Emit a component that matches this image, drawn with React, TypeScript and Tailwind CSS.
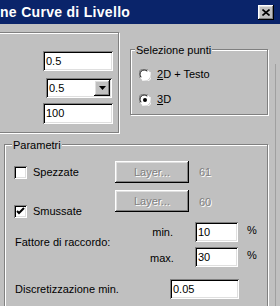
import React from 'react';

const etched = 'border border-[#808080] shadow-[inset_1px_1px_0_#fff,1px_1px_0_#fff]';
const sunken =
  'bg-white shadow-[inset_1px_1px_0_#808080,inset_-1px_-1px_0_#fff,inset_2px_2px_0_#000,inset_-2px_-2px_0_#dfdfdf]';
const raised =
  'bg-[#c0c0c0] shadow-[inset_-1px_-1px_0_#000,inset_1px_1px_0_#fff,inset_-2px_-2px_0_#808080,inset_2px_2px_0_#dfdfdf]';
const etchedText = 'text-[#808080] [text-shadow:1px_1px_0_#fff]';

const TextBox = ({ value, className }: { value: string; className: string }) => (
  <div className={`${sunken} ${className} flex items-center pl-[3px] text-black`}>{value}</div>
);

const Radio = ({ checked }: { checked?: boolean }) => (
  <svg width="12" height="12" viewBox="0 0 12 12" className="shrink-0">
    <circle cx="6" cy="6" r="5.5" fill="#fff" />
    <path d="M1.2 9 A5.3 5.3 0 0 1 9 1.2" fill="none" stroke="#808080" strokeWidth="1" />
    <path d="M2.2 8.2 A4.2 4.2 0 0 1 8.2 2.2" fill="none" stroke="#000" strokeWidth="1" />
    <path d="M10.8 3 A5.3 5.3 0 0 1 3 10.8" fill="none" stroke="#fff" strokeWidth="1" />
    {checked && <circle cx="6" cy="6" r="2" fill="#000" />}
  </svg>
);

const Check = ({ checked }: { checked?: boolean }) => (
  <div className={`${sunken} w-[13px] h-[13px] shrink-0 flex items-center justify-center`}>
    {checked && (
      <svg width="9" height="9" viewBox="0 0 9 9">
        <path d="M1 4 L3 6 L8 1" fill="none" stroke="#000" strokeWidth="2" />
      </svg>
    )}
  </div>
);

const LayerButton = () => (
  <div className={`${raised} w-[74px] h-[22px] flex items-center justify-center ${etchedText}`}>Layer...</div>
);

export default function App() {
  return (
    <div className="w-[280px] h-[306px] overflow-hidden bg-[#c0c0c0] text-[11px] text-black font-['Liberation_Sans',Arial,sans-serif]">
      {/* title bar */}
      <div className="h-6 bg-[#0a246a] flex items-center">
        <span className="text-white font-bold text-[14px] whitespace-nowrap tracking-[0.3px]">ne Curve di Livello</span>
        <div className={`${raised} ml-auto mr-[6px] w-4 h-[15px] flex items-center justify-center`}>
          <svg width="8" height="7" viewBox="0 0 8 7">
            <path d="M0.5 0.5 L7.5 6.5 M7.5 0.5 L0.5 6.5" stroke="#000" strokeWidth="1.6" />
          </svg>
        </div>
      </div>

      <div className="flex h-[282px]">
        <div className="w-[275px] shrink-0">
          {/* top row */}
          <div className="flex items-start mt-[8px]">
            <div className={`${etched} ml-[-10px] w-[129px] h-[101px] flex flex-col items-end pt-[18px] pr-[5px]`}>
              <TextBox value="0.5" className="w-[70px] h-[20px]" />
              <div className={`${sunken} mt-[7px] mr-[1px] w-[66px] h-[20px] flex items-center p-[2px]`}>
                <span className="flex-1 pl-[1px]">0.5</span>
                <div className={`${raised} w-4 h-4 flex items-center justify-center`}>
                  <svg width="7" height="4" viewBox="0 0 7 4">
                    <path d="M0 0 H7 L3.5 4 Z" fill="#000" />
                  </svg>
                </div>
              </div>
              <TextBox value="100" className="mt-[5px] w-[70px] h-[21px]" />
            </div>

            <div className={`${etched} relative ml-[11px] mt-[17px] w-[138px] h-[66px] pt-[18px] pl-[8px]`}>
              <span className="absolute left-[4px] top-[-8px] px-[1px] bg-[#c0c0c0]">Selezione punti</span>
              <div className="flex items-center h-[13px] gap-[6px]">
                <Radio />
                <span>
                  <span className="underline">2</span>D + Testo
                </span>
              </div>
              <div className="flex items-center h-[13px] gap-[6px] mt-[12px]">
                <Radio checked />
                <span>
                  <span className="underline">3</span>D
                </span>
              </div>
            </div>
          </div>

          {/* Parametri */}
          <div className={`${etched} relative ml-[4px] mt-[11px] w-[264px] h-[180px] pt-[16px] pl-[9px]`}>
            <span className="absolute left-[7px] top-[-8px] px-[1px] bg-[#c0c0c0]">Parametri</span>

            <div className="flex items-center h-[22px]">
              <div className="w-[101px] flex items-center gap-[6px]">
                <Check />
                <span>Spezzate</span>
              </div>
              <LayerButton />
              <span className={`ml-[10px] ${etchedText}`}>61</span>
            </div>

            <div className="flex items-start h-[27px] mt-[7px]">
              <div className="w-[101px] flex items-center gap-[6px] mt-[13px]">
                <Check checked />
                <span>Smussate</span>
              </div>
              <LayerButton />
              <span className={`ml-[10px] mt-[4px] ${etchedText}`}>60</span>
            </div>

            <div className="flex items-center mt-[5px] ml-[-9px]">
              <span className="w-[145px] pl-[10px] mb-[4px]">Fattore di raccordo:</span>
              <div className="flex flex-col gap-[5px]">
                <div className="flex items-center h-[20px]">
                  <span className="w-[23px] text-right">min.</span>
                  <TextBox value="10" className="ml-[22px] w-[43px] h-[20px]" />
                  <span className="ml-[9px] mb-[4px]">%</span>
                </div>
                <div className="flex items-center h-[20px]">
                  <span className="w-[23px] text-right mt-[2px]">max.</span>
                  <TextBox value="30" className="ml-[22px] w-[43px] h-[20px]" />
                  <span className="ml-[9px] mb-[4px]">%</span>
                </div>
              </div>
            </div>

            <div className="flex items-center mt-[12px] ml-[-9px]">
              <span className="w-[165px] pl-[10px]">Discretizzazione min.</span>
              <TextBox value="0.05" className="w-[69px] h-[20px]" />
            </div>
          </div>
        </div>
        {/* right edge frame line */}
        <div className="w-px bg-[#a0a0a0] mt-[40px]" />
      </div>
    </div>
  );
}
